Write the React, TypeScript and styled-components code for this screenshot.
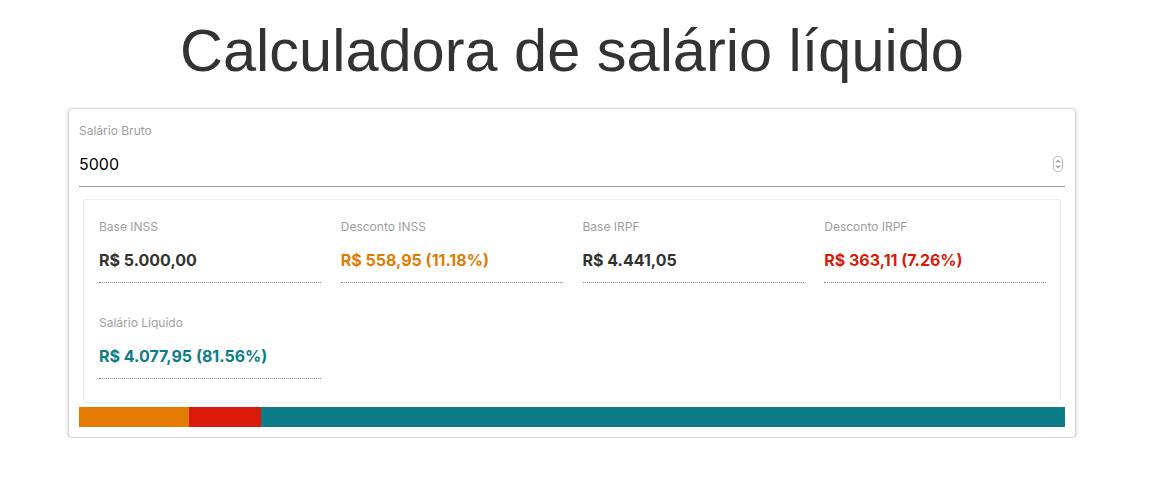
import React from "react";
import styled, { createGlobalStyle } from "styled-components";

const Global = createGlobalStyle`
  html, body { margin: 0; padding: 0; background: #fff; }
  body { font-family: Inter, "Noto Sans", sans-serif; color: #333; }
`;

const Title = styled.h1`
  margin: 0;
  padding-top: 15px;
  height: 94px;
  box-sizing: border-box;
  text-align: center;
  font-family: "Liberation Sans", Arial, sans-serif;
  font-weight: 400;
  font-size: 59.5px;
  line-height: 72px;
  color: #333;
  padding-right: 6px;
`;

const Card = styled.div`
  box-sizing: border-box;
  width: 1008px;
  margin: 14px 0 0 68px;
  padding: 10px 10px 10px 10px;
  border: 1px solid #d8d8d8;
  border-radius: 4px;
  box-shadow: 0 1px 4px rgba(0, 0, 0, 0.18);
  background: #fff;
`;

const Field = styled.label`
  display: block;
  position: relative;
`;

const FieldLabel = styled.div`
  font-size: 12px;
  line-height: 16px;
  color: #9e9e9e;
  padding-top: 4px;
`;

const Input = styled.input`
  display: block;
  box-sizing: border-box;
  width: 100%;
  height: 48px;
  border: none;
  border-bottom: 1px solid #9e9e9e;
  outline: none;
  padding: 3px 0 0 0;
  font-family: Inter, "Noto Sans", sans-serif;
  font-size: 16px;
  color: #000;
  background: transparent;
`;

const Spinner = styled.span`
  position: absolute;
  right: 2px;
  top: 37px;
  width: 8px;
  height: 14px;
  border: 1px solid #bbb;
  border-radius: 4px;
  display: flex;
  align-items: center;
  justify-content: center;
  background: #fff;
`;

const Results = styled.div`
  margin: 12px 4px 0 4px;
  padding: 19px 14px 23px 15px;
  border: 1px solid #eeeeee;
  display: grid;
  grid-template-columns: repeat(4, 1fr);
  column-gap: 20px;
  row-gap: 32px;
`;

const Item = styled.div`
  border-bottom: 1px dotted #8a8a8a;
  padding-bottom: 10px;
`;

const ItemLabel = styled.div`
  font-size: 12px;
  line-height: 16px;
  color: #9e9e9e;
`;

const ItemValue = styled.div<{ $color: string }>`
  margin-top: 13px;
  font-size: 16px;
  line-height: 24px;
  font-weight: 700;
  color: ${(p) => p.$color};
`;

const Bar = styled.div`
  margin-top: 4px;
  height: 20px;
  display: flex;
`;

const Segment = styled.div<{ $color: string }>`
  height: 100%;
  background: ${(p) => p.$color};
`;

const items = [
  { label: "Base INSS", value: "R$ 5.000,00", color: "#333333" },
  { label: "Desconto INSS", value: "R$ 558,95 (11.18%)", color: "#e27b00" },
  { label: "Base IRPF", value: "R$ 4.441,05", color: "#333333" },
  { label: "Desconto IRPF", value: "R$ 363,11 (7.26%)", color: "#db1a0c" },
  { label: "Salário Líquido", value: "R$ 4.077,95 (81.56%)", color: "#0d7c89" },
];

export default function App() {
  return (
    <>
      <Global />
      <Title>Calculadora de salário líquido</Title>
      <Card>
        <Field>
          <FieldLabel>Salário Bruto</FieldLabel>
          <Input type="text" defaultValue="5000" />
          <Spinner>
            <svg width="6" height="10" viewBox="0 0 6 10" fill="none" stroke="#555" strokeWidth="1">
              <path d="M1 3.5 L3 1.5 L5 3.5" />
              <path d="M1 6.5 L3 8.5 L5 6.5" />
            </svg>
          </Spinner>
        </Field>
        <Results>
          {items.map((it) => (
            <Item key={it.label}>
              <ItemLabel>{it.label}</ItemLabel>
              <ItemValue $color={it.color}>{it.value}</ItemValue>
            </Item>
          ))}
        </Results>
        <Bar>
          <Segment $color="#e27b00" style={{ width: "11.18%" }} />
          <Segment $color="#db1a0c" style={{ width: "7.26%" }} />
          <Segment $color="#0d7c89" style={{ flex: 1 }} />
        </Bar>
      </Card>
    </>
  );
}
